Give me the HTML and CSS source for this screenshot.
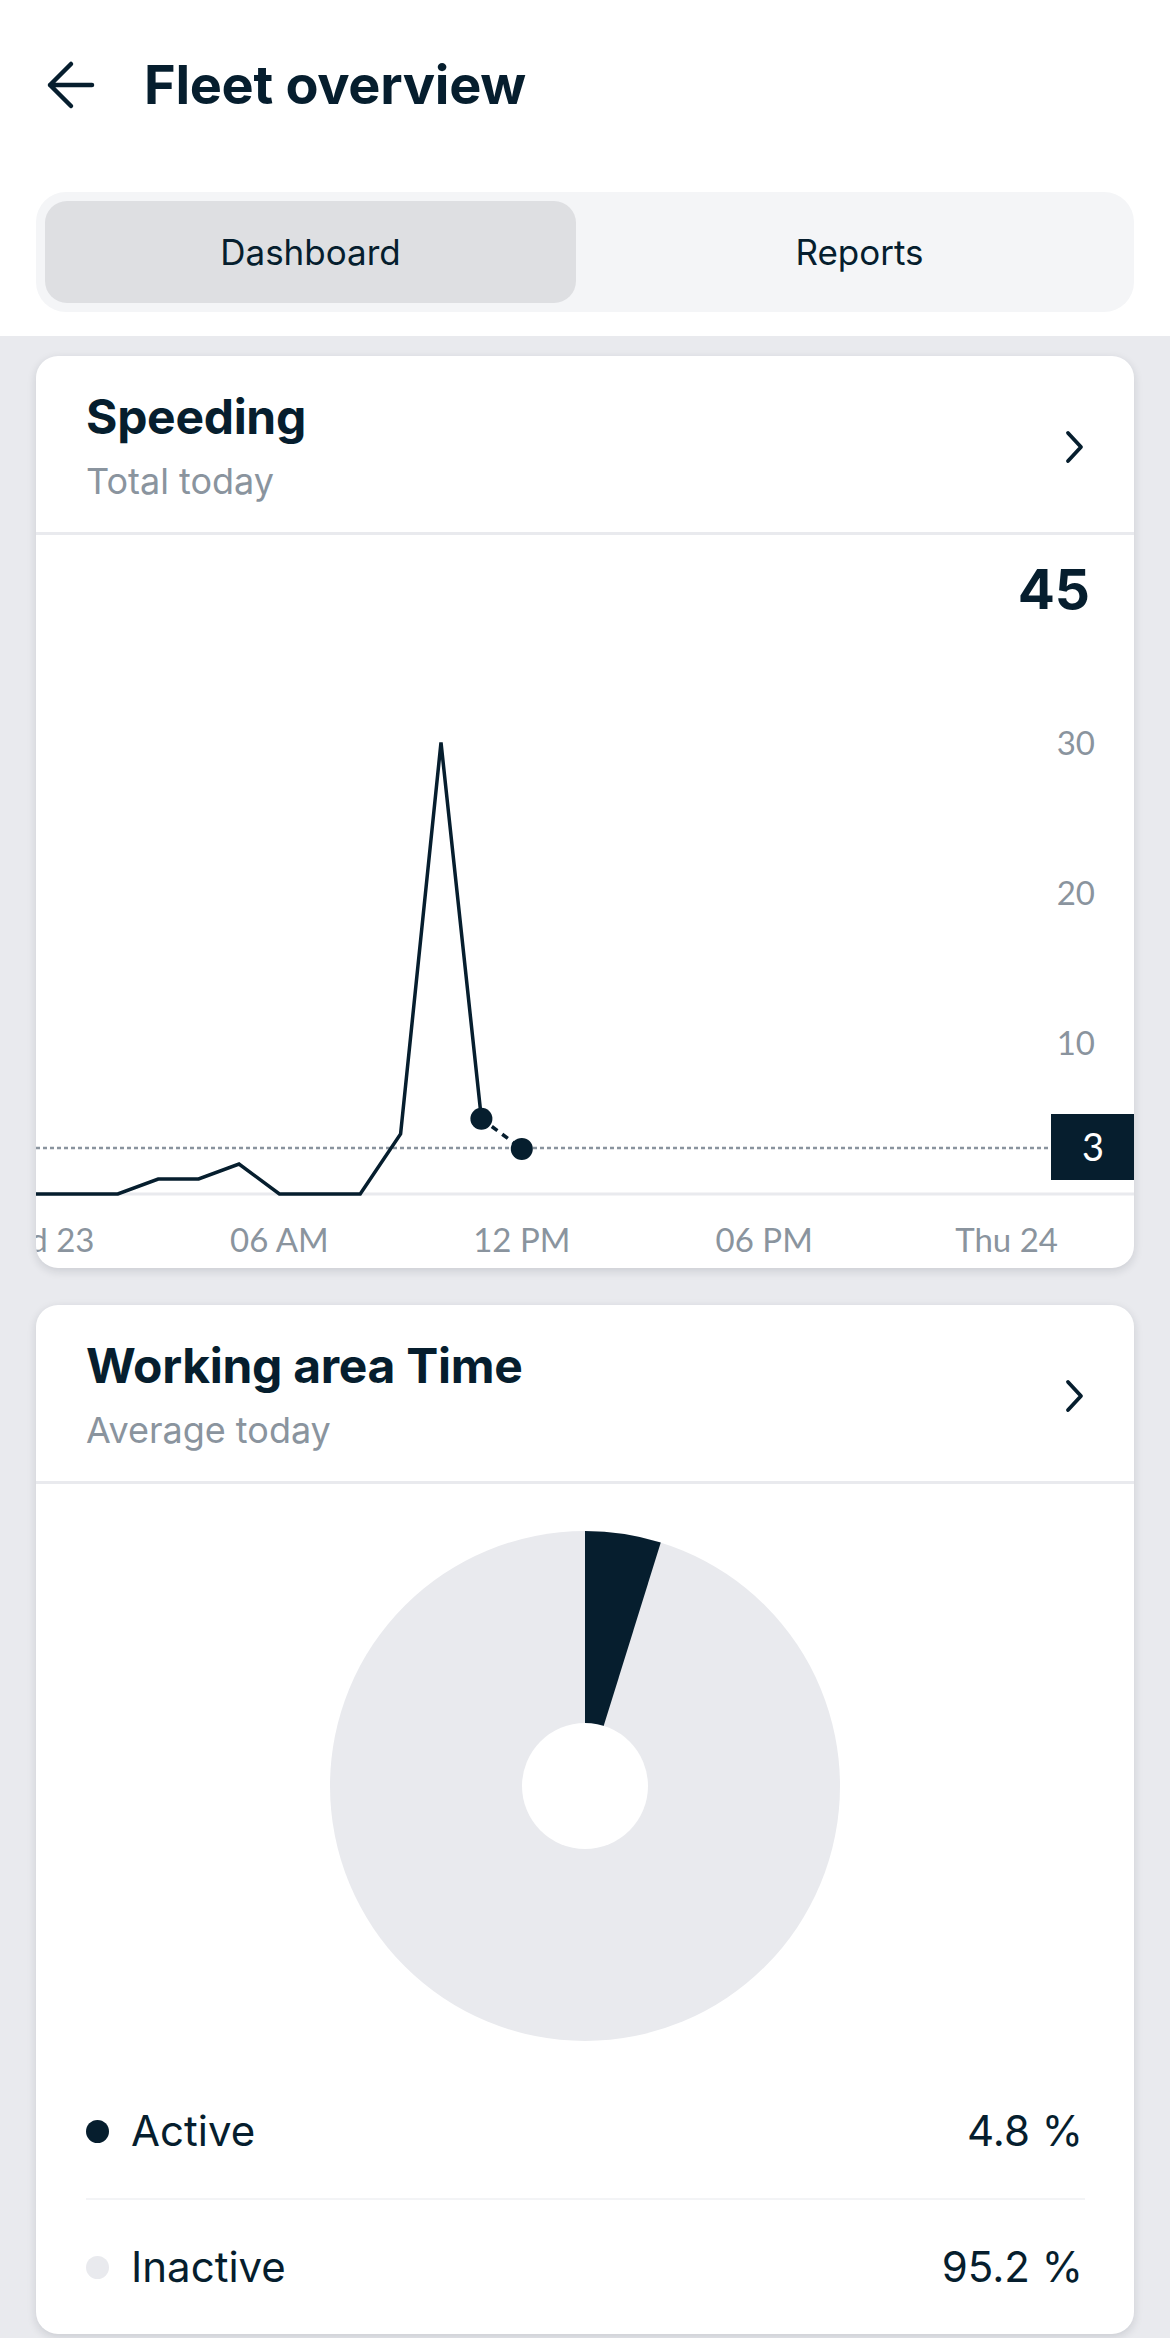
FILE: index.html
```html
<!DOCTYPE html>
<html lang="en">
<head>
<meta charset="utf-8">
<title>Fleet overview</title>
<link rel="stylesheet" href="styles.css">
</head>
<body>
<header class="header">
  <div class="topbar">
    <svg class="back" width="52" height="52" viewBox="0 0 52 52" aria-hidden="true">
      <path d="M5 26 H47 M26 5 L5 26 L26 47" fill="none" stroke="#061e2e" stroke-width="4.5" stroke-linecap="round" stroke-linejoin="round"/>
    </svg>
    <h1 class="title">Fleet overview</h1>
  </div>
  <nav class="tabs">
    <div class="tab tab-active">Dashboard</div>
    <div class="tab">Reports</div>
  </nav>
</header>

<main class="main">
  <section class="card">
    <div class="card-head">
      <div class="card-titles">
        <h2 class="card-title">Speeding</h2>
        <div class="card-sub">Total today</div>
      </div>
      <svg class="chev" width="21" height="36" viewBox="0 0 21 36" aria-hidden="true">
        <path d="M4 4 L17 18 L4 32" fill="none" stroke="#061e2e" stroke-width="3.8" stroke-linecap="round" stroke-linejoin="round"/>
      </svg>
    </div>
    <svg class="chart" width="1098" height="733" viewBox="0 0 1098 733">
      <text class="total" x="1054" y="74" text-anchor="end">45</text>
      <text class="axis" x="1059" y="220" text-anchor="end">30</text>
      <text class="axis" x="1059" y="370" text-anchor="end">20</text>
      <text class="axis" x="1059" y="520" text-anchor="end">10</text>
      <line x1="0" y1="659" x2="1098" y2="659" stroke="#e9eaee" stroke-width="3"/>
      <line x1="0" y1="613" x2="1015" y2="613" stroke="#8a949e" stroke-width="2.5" stroke-dasharray="4 3"/>
      <polyline points="-40,659 1,659 41.4,659 81.8,659 122.2,644 162.6,644 203,629 243.4,659 283.8,659 324.2,659 364.6,599 405,207.5 445.4,583.7" fill="none" stroke="#061e2e" stroke-width="3.5" stroke-linejoin="miter"/>
      <line x1="445.4" y1="583.7" x2="485.8" y2="613.9" stroke="#061e2e" stroke-width="3.5" stroke-dasharray="7 6"/>
      <circle cx="445.4" cy="583.7" r="11" fill="#061e2e"/>
      <circle cx="485.8" cy="613.9" r="11" fill="#061e2e"/>
      <rect x="1015" y="579" width="83" height="66" fill="#061e2e"/>
      <text class="marker" x="1057" y="626" text-anchor="middle">3</text>
      <text class="axis" x="1" y="717" text-anchor="middle">Wed 23</text>
      <text class="axis" x="243.4" y="717" text-anchor="middle">06 AM</text>
      <text class="axis" x="485.8" y="717" text-anchor="middle">12 PM</text>
      <text class="axis" x="728.2" y="717" text-anchor="middle">06 PM</text>
      <text class="axis" x="970.6" y="717" text-anchor="middle">Thu 24</text>
    </svg>
  </section>

  <section class="card">
    <div class="card-head">
      <div class="card-titles">
        <h2 class="card-title">Working area Time</h2>
        <div class="card-sub">Average today</div>
      </div>
      <svg class="chev" width="21" height="36" viewBox="0 0 21 36" aria-hidden="true">
        <path d="M4 4 L17 18 L4 32" fill="none" stroke="#061e2e" stroke-width="3.8" stroke-linecap="round" stroke-linejoin="round"/>
      </svg>
    </div>
    <div class="pie-wrap">
      <svg class="pie" width="510" height="510" viewBox="0 0 510 510" aria-hidden="true">
        <circle cx="255" cy="255" r="255" fill="#e9eaee"/>
        <path d="M255 255 L255 0 A255 255 0 0 1 330.76 11.5 Z" fill="#061e2e"/>
        <circle cx="255" cy="255" r="63" fill="#ffffff"/>
      </svg>
    </div>
    <ul class="legend">
      <li class="legend-row">
        <span class="dot dot-dark"></span>
        <span class="legend-label">Active</span>
        <span class="legend-value">4.8 %</span>
      </li>
      <li class="legend-row">
        <span class="dot dot-light"></span>
        <span class="legend-label">Inactive</span>
        <span class="legend-value">95.2 %</span>
      </li>
    </ul>
  </section>
</main>
</body>
</html>
```

FILE: styles.css
```css
* {
  box-sizing: border-box;
}

html, body {
  margin: 0;
  padding: 0;
}

body {
  width: 1170px;
  min-height: 2338px;
  background: #e9eaee;
  font-family: "Inter", "Noto Sans", sans-serif;
  color: #061e2e;
}

.header {
  background: #ffffff;
  padding: 0 36px 24px;
}

.topbar {
  height: 170px;
  display: flex;
  align-items: center;
  padding-left: 9px;
  gap: 47px;
}

.back {
  display: block;
  flex: none;
}

.title {
  margin: 0;
  font-size: 54px;
  line-height: 64px;
  font-weight: 700;
  letter-spacing: -0.3px;
}

.tabs {
  margin-top: 22px;
  height: 120px;
  background: #f4f5f7;
  border-radius: 30px;
  padding: 9px;
  display: grid;
  grid-template-columns: 1fr 1fr;
  gap: 18px;
}

.tab {
  display: flex;
  align-items: center;
  justify-content: center;
  border-radius: 22px;
  font-size: 35px;
  font-weight: 400;
}

.tab-active {
  background: #dedfe2;
}

.main {
  padding: 20px 36px 6px;
  display: flex;
  flex-direction: column;
  gap: 37px;
}

.card {
  background: #ffffff;
  border-radius: 22px;
  overflow: hidden;
  box-shadow: 0 3px 10px rgba(20, 30, 45, 0.14);
}

.card-head {
  display: flex;
  align-items: center;
  justify-content: space-between;
  padding: 32px 49px 29px 50px;
  border-bottom: 3px solid #e9eaee;
}

.card-title {
  margin: 0;
  font-size: 48px;
  line-height: 58px;
  font-weight: 700;
  letter-spacing: -0.3px;
}

.card-sub {
  margin-top: 13px;
  font-size: 36px;
  line-height: 44px;
  color: #8a949e;
}

.chev {
  display: block;
  flex: none;
  margin-top: 2px;
}

.chart {
  display: block;
}

.chart .total {
  font-family: "Inter", "Noto Sans", sans-serif;
  font-size: 55px;
  font-weight: 700;
  fill: #061e2e;
}

.chart .axis {
  font-family: "Lato", "Noto Sans", sans-serif;
  font-size: 33px;
  fill: #8a949e;
}

.chart .marker {
  font-family: "Lato", "Noto Sans", sans-serif;
  font-size: 38px;
  fill: #ffffff;
}

.pie-wrap {
  display: flex;
  justify-content: center;
  padding-top: 47px;
}

.pie {
  display: block;
}

.legend {
  list-style: none;
  margin: 23px 0 0;
  padding: 0 49px 0 50px;
}

.legend-row {
  display: flex;
  align-items: center;
  padding: 42px 0;
  font-size: 42px;
  line-height: 50px;
}

.legend-row + .legend-row {
  border-top: 2px solid #f3f4f6;
}

.dot {
  width: 23px;
  height: 23px;
  border-radius: 50%;
  flex: none;
  margin-right: 22px;
}

.dot-dark {
  background: #061e2e;
}

.dot-light {
  background: #e9eaee;
}

.legend-label {
  flex: 1;
}

.legend-value {
  text-align: right;
  padding-right: 2px;
}
```
